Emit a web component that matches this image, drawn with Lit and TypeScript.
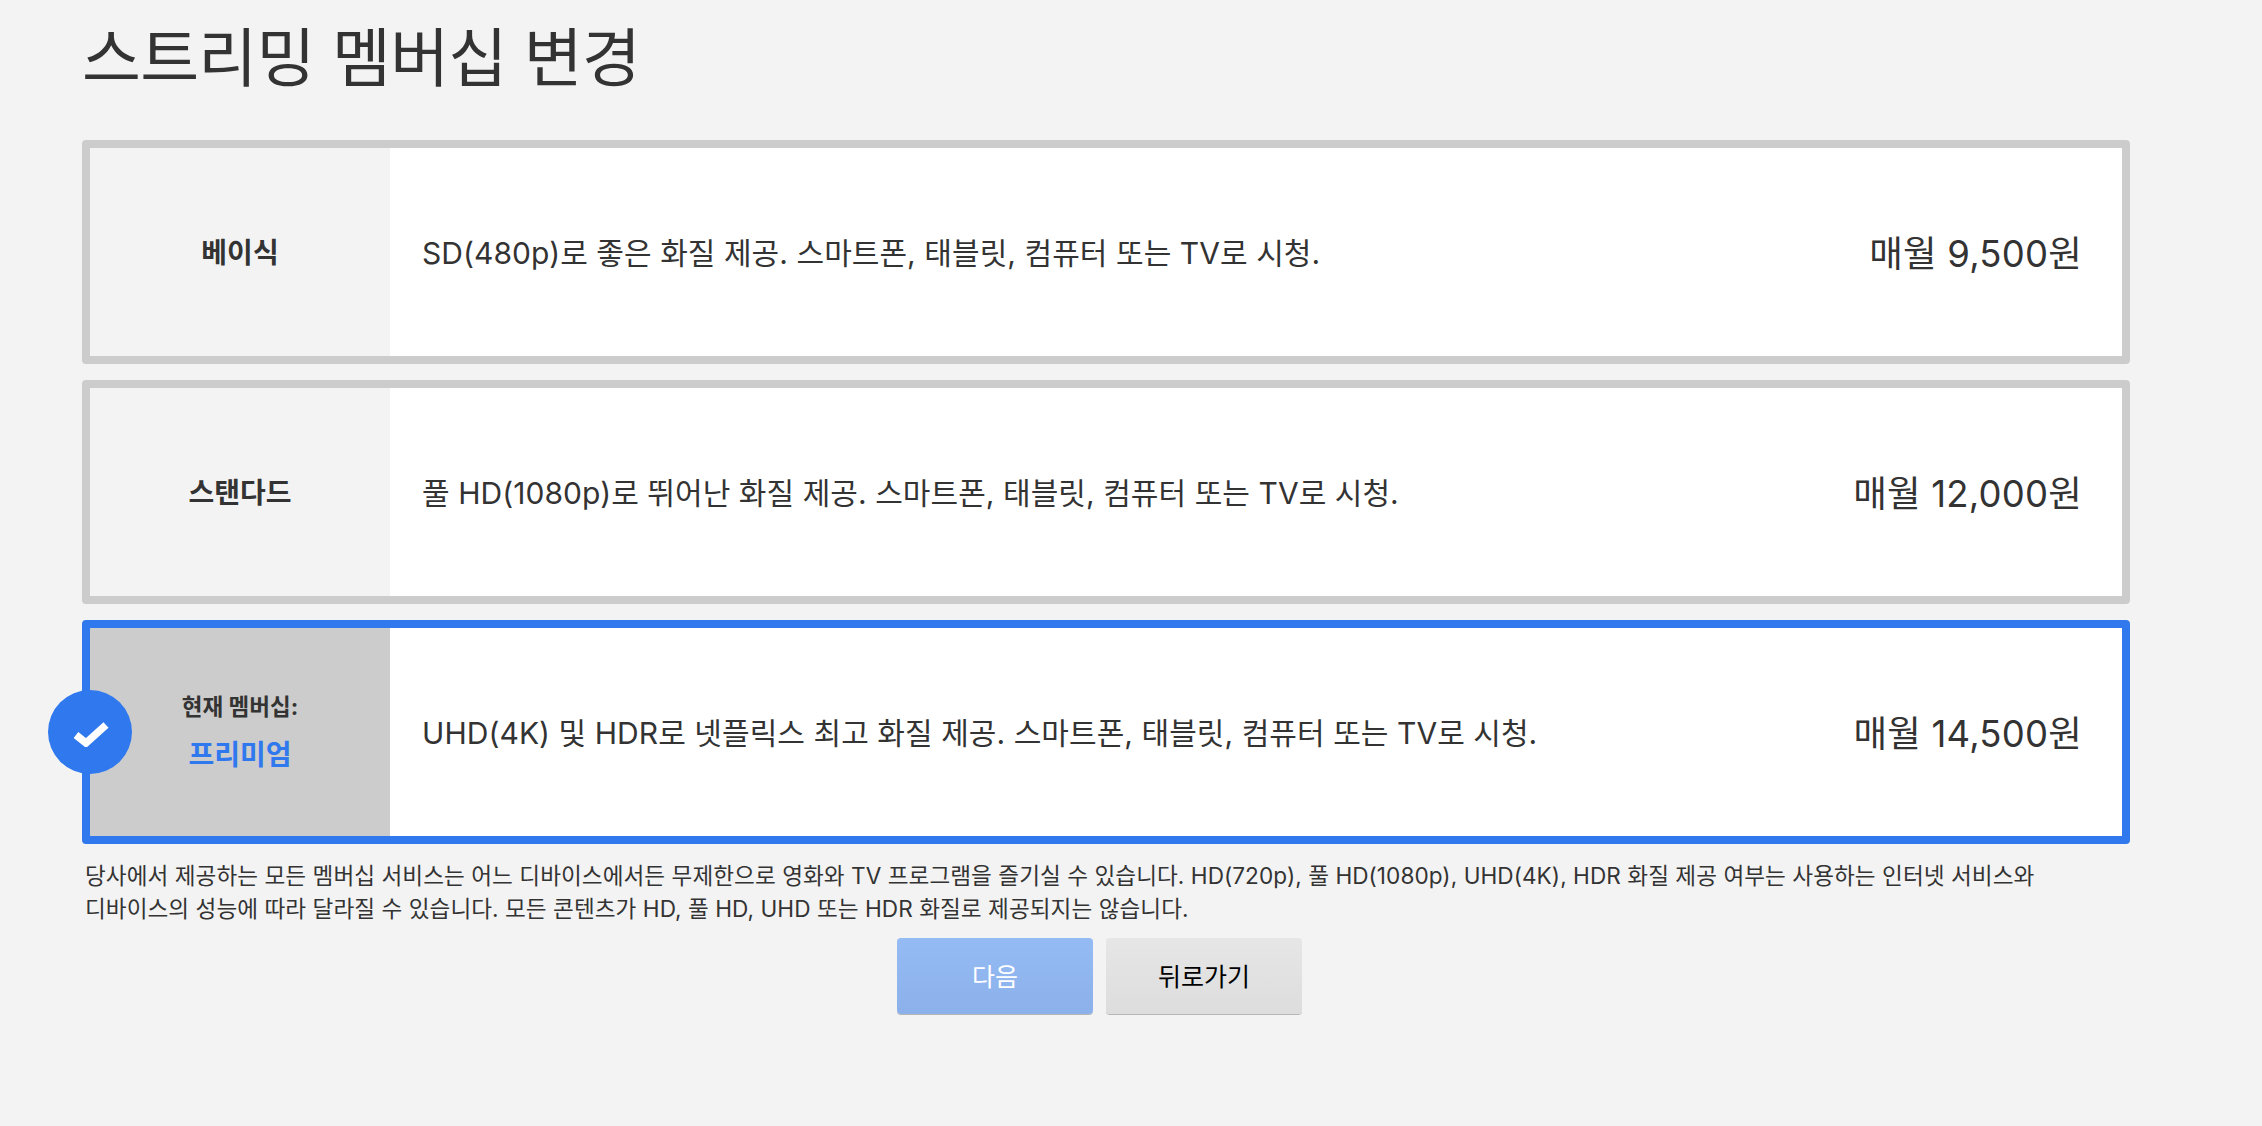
import { LitElement, html, css } from "lit";
import { customElement } from "lit/decorators.js";

const plans = [
  { name: "베이식", desc: "SD(480p)로 좋은 화질 제공. 스마트폰, 태블릿, 컴퓨터 또는 TV로 시청.", price: "매월 9,500원", current: false },
  { name: "스탠다드", desc: "풀 HD(1080p)로 뛰어난 화질 제공. 스마트폰, 태블릿, 컴퓨터 또는 TV로 시청.", price: "매월 12,000원", current: false },
  { name: "프리미엄", desc: "UHD(4K) 및 HDR로 넷플릭스 최고 화질 제공. 스마트폰, 태블릿, 컴퓨터 또는 TV로 시청.", price: "매월 14,500원", current: true },
];

@customElement("app-root")
export class AppRoot extends LitElement {
  static styles = css`
    :host {
      display: block;
      height: 1126px;
      background: #f3f3f3;
      color: #333;
      font-family: Inter, "Noto Sans CJK KR", sans-serif;
      overflow: hidden;
    }
    .page { width: 2048px; margin-left: 82px; }
    h1 { margin: 0; padding-top: 16px; height: 140px; box-sizing: border-box; font-size: 64px; line-height: 84px; font-weight: 400; letter-spacing: -0.7px; }
    .plans { display: flex; flex-direction: column; gap: 16px; }
    .card { position: relative; display: flex; height: 224px; box-sizing: border-box; border: 8px solid #ccc; border-radius: 4px; background: #fff; }
    .card.current { border-color: #2f78ee; }
    .name { width: 300px; flex: none; box-sizing: border-box; padding-bottom: 3px; display: flex; flex-direction: column; align-items: center; justify-content: center; background: #f3f3f3; font-size: 28px; font-weight: 700; }
    .current .name { background: #ccc; }
    .label { font-size: 22.5px; font-weight: 700; margin-bottom: 12px; }
    .current .plan { color: #2f78ee; font-size: 28px; }
    .desc { flex: 1; padding: 0 0 2px 32px; font-size: 30px; letter-spacing: 0.06px; align-self: center; }
    .price { padding: 0 40px 2px 0; font-size: 36.5px; letter-spacing: 0.2px; align-self: center; }
    .check { position: absolute; left: -42px; top: 62px; width: 84px; height: 84px; border-radius: 50%; background: #2f78ee; display: flex; align-items: center; justify-content: center; }
    .check svg { filter: blur(0.6px); }
    .note { margin: 16px 0 0 3px; font-size: 22.6px; letter-spacing: 0.05px; line-height: 32.5px; width: 1960px; }
    .actions { display: flex; justify-content: center; gap: 13px; margin-top: 13px; padding-right: 13px; }
    .btn { width: 196px; height: 76px; box-sizing: border-box; border: 0; border-radius: 4px; padding-bottom: 4px; font-family: inherit; font-size: 25px; box-shadow: 0 1px 0 rgba(0,0,0,.25); }
    .next { color: #fff; background: linear-gradient(#95bbf4, #8bb0ea); }
    .back { color: #000; background: linear-gradient(#e6e6e6, #ddd); }
  `;

  render() {
    return html`<div class="page">
      <h1>스트리밍 멤버십 변경</h1>
      <div class="plans">
        ${plans.map((p) => html`<div class="card ${p.current ? "current" : ""}">
          ${p.current ? html`<div class="check"><svg width="38" height="30" viewBox="0 0 38 30"><path d="M5 18 L15 26 L35 8" fill="none" stroke="#fff" stroke-width="7.5"/></svg></div>` : ""}
          <div class="name">
            ${p.current ? html`<div class="label">현재 멤버십:</div>` : ""}
            <div class="plan">${p.name}</div>
          </div>
          <div class="desc">${p.desc}</div>
          <div class="price">${p.price}</div>
        </div>`)}
      </div>
      <p class="note">당사에서 제공하는 모든 멤버십 서비스는 어느 디바이스에서든 무제한으로 영화와 TV 프로그램을 즐기실 수 있습니다. HD(720p), 풀 HD(1080p), UHD(4K), HDR 화질 제공 여부는 사용하는 인터넷 서비스와 디바이스의 성능에 따라 달라질 수 있습니다. 모든 콘텐츠가 HD, 풀 HD, UHD 또는 HDR 화질로 제공되지는 않습니다.</p>
      <div class="actions">
        <button class="btn next">다음</button>
        <button class="btn back">뒤로가기</button>
      </div>
    </div>`;
  }
}
